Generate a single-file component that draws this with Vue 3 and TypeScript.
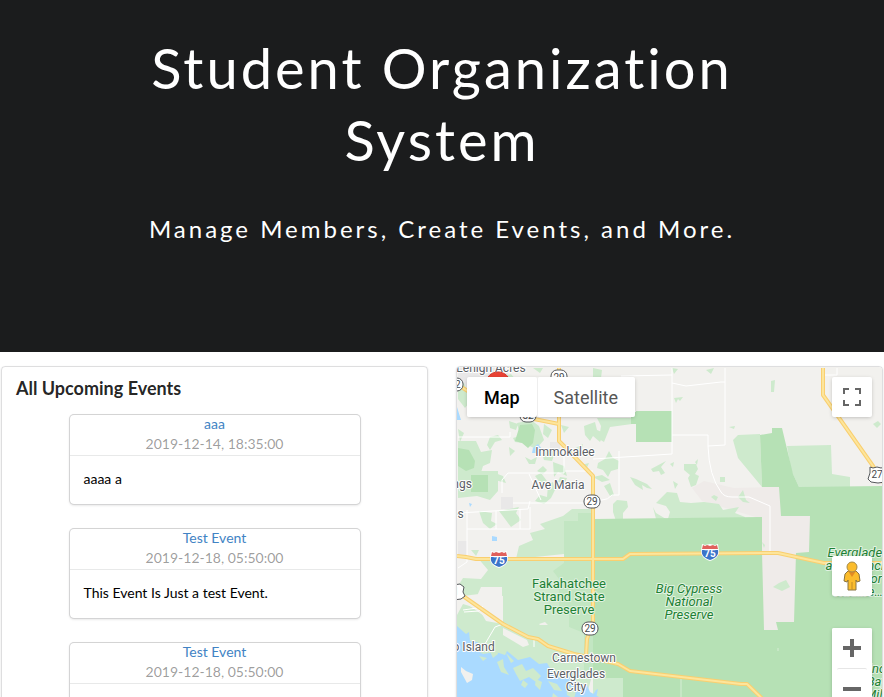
<script setup lang="ts">
import { ref } from 'vue'

interface OrgEvent {
  id: number
  title: string
  when: string
  description: string
}

interface MapLabel {
  x: number
  y: number
  kind: 'town' | 'park' | 'preserve'
  lines: string[]
}

const events: OrgEvent[] = [
  { id: 1, title: 'aaa', when: '2019-12-14, 18:35:00', description: 'aaaa a' },
  { id: 2, title: 'Test Event', when: '2019-12-18, 05:50:00', description: 'This Event Is Just a test Event.' },
  { id: 3, title: 'Test Event', when: '2019-12-18, 05:50:00', description: 'This Event Is Just a test Event.' },
]

const labels: MapLabel[] = [
  { x: 490, y: 371, kind: 'town', lines: ['Lehigh Acres'] },
  { x: 564, y: 455, kind: 'town', lines: ['Immokalee'] },
  { x: 557, y: 488, kind: 'town', lines: ['Ave Maria'] },
  { x: 432, y: 487, kind: 'town', lines: ['Bonita Springs'] },
  { x: 444, y: 517, kind: 'town', lines: ['Naples'] },
  { x: 459, y: 650, kind: 'town', lines: ['Marco Island'] },
  { x: 583, y: 661, kind: 'town', lines: ['Carnestown'] },
  { x: 575, y: 677, kind: 'town', lines: ['Everglades', 'City'] },
  { x: 568, y: 587, kind: 'park', lines: ['Fakahatchee', 'Strand State', 'Preserve'] },
  { x: 688, y: 592, kind: 'preserve', lines: ['Big Cypress', 'National', 'Preserve'] },
  { x: 857, y: 556, kind: 'preserve', lines: ['Everglades', 'and Francis', 'S. Taylor', 'Wildlife…'] },
  { x: 876, y: 672, kind: 'preserve', lines: ['Inc', 'Bay', 'Milli'] },
]

const mapType = ref<'map' | 'satellite'>('map')
</script>

<template>
  <header class="hero">
    <h1>Student Organization System</h1>
    <p>Manage Members, Create Events, and More.</p>
  </header>

  <main class="columns">
    <section class="segment events">
      <h2>All Upcoming Events</h2>
      <div class="cards">
        <article v-for="event in events" :key="event.id" class="card">
          <div class="card-head">
            <a href="#">{{ event.title }}</a>
            <span class="when">{{ event.when }}</span>
          </div>
          <p class="card-body">{{ event.description }}</p>
        </article>
      </div>
    </section>

    <section class="segment map" aria-label="Event map">
      <svg class="tiles" viewBox="456 366 425 400" preserveAspectRatio="xMidYMin slice">
        <rect x="356" y="366" width="700" height="700" fill="#f2f1ee" />

        <!-- built-up land -->
        <g fill="#e9e8e8">
          <path d="M457 367h46l8 12-20 18-34-12zM549 441h10v10h-10zM500 496h12v12h-12zM457 540h9v14h-9z" />
          <path fill="#efebe9" d="M691 487l12-7 30 7 45-1 3 30-20 2-60-18z" />
        </g>

        <!-- light vegetation -->
        <g class="light">
          <path d="M457 381l6 1 4 10 1 10-4 5-7-9zM501 376l9-3 5 6h-12zM592 367l9 2-1 8-8 2zM671 367l6 1-4 5zM705 369l8-2-3 6zM673 397l9-1-3 4-2-2-2 4zM770 380l4-1-1 12h-3zM728 426l6-1-1 3zM872 423l5-3 3 3-4 4z" />
          <path d="M508 420l9 3-2 6-6-2zM516 422l14-3 8 6 5 14-8 9-13-6-8-1-2-4 7-2zM457 428l6 4-4 9zM457 440h18l5 11 11-2-2 13-7 3-4 13-21 2zM583 425l11-4 2 8 7 3-4 9-7-6-3 5-5-6zM596 417h35v6l-22 3-6 15-5-3 2-13zM543 423l8 6-4 8-5-4zM586 430l4-5 2 8z" />
          <path d="M489 436l8-2 4 5-7 2-5 8-3-5zM541 452l8-4 5 4-3 8-8-1zM508 446l6 4-5 5zM560 424l8 2-5 6zM575 407l10-4 2 5-6 4zM524 456l6 3 6-3-2 7h-6zM494 472l8 3 3 7-11-3zM559 476l7 1-2 5-7-1zM536 470l6-5 4 4-4 4zM552 461l11 4 3 10-9-4-4 5zM569 450l13-7-3 12zM580 464l8-2-3 7z" />
          <path d="M597 462l7-4 4-8 4 7 6 3-1 8-7 2-3 6-5-7-6-2zM592 476l9-2 8 5-8 2zM603 485l6-3 4 12-4 1zM629 476l6 2 11 5 5 5-5-1-5-3 1 5-8-5zM650 468l15-8-5 6 4 6-4 2-2-4-6 1zM683 463h12l2 5-3 5 4 2-3 9-5 2-3-9 2-3-6-5zM669 463l4-2-1 5zM694 461l3-3-1 6zM719 476h5v5h-5zM672 480l5 3-3 5zM713 494l4 2-2 4-5-4zM612 503l4-4 10 1 1 6-5 6v8h-7l-3-9zM666 491l10 1 3 9 11 1 13-1 15 2 4 6 16-3-4 6 10 4v3l-78 2 3-10-4-6-10-3zM652 506l3 6 10 6h-10zM737 496l5-7 3 10 4 3-7-1z" />
          <path d="M737 434l22-1 2 53-24-29-5-18zM786 445l44-1 1 29 18 3v10h-51l-8-17zM532 367h10l-3 5z" />
          <path d="M457 470h40v20l-8 9-13-4-19 2zM478 510l13 2-1 8 6 3-7 5-7-6zM498 510l20-4-3 6 5 7-10 7-6-8zM534 475l6-3 6 8-6 3zM534 500l5-6 7 2 1-12 5-3 2 8-4 8-7 6zM515 558l3-13 14-6-3-7 15-4-5-5 23-8 9-7h21v42z" />
          <path d="M470 549h8l-3 6 4 3 8-2 6 3h100v108l-8 30H456V614l6-11 16 5 7 12 17 3 0-28-24-2-16 2-5-10 5-8 18 1 7-9z" />
        </g>
        <g fill="#f2f1ee">
          <path d="M462 600l14-5 4-9h21v23l-8 8-10-2zM502 627l24 12 2 5-6 2-20-12zM538 623l6-2 3 3h-8z" />
        </g>
        <path fill="#c2e6c2" d="M563 520h14v-8h15v162h-9v-42l-15-6v-13h-10v-35l-6-8 11-8z" />

        <!-- dense parkland -->
        <g class="dark">
          <path d="M635 410h36v31h-36zM630 411h5v12h-5zM514 440l5-16 12-1 3 6-2 13-5 5-6-5zM457 447l11 2 6 11-1 7-8 3-8-5zM470 474h17v17h-17z" />
          <path d="M759 434l12-2v-5h10l11 46 6 13 86-1v292H592V518l169-2v-30z" />
        </g>
        <path fill="#efebe9" d="M761 486h17l2 29h29l-1 36-13 1-2 69h-18l2 8h-14l-2-78z" />
        <path class="light" d="M772 586l6-4 7-3 4 7-8 4zM761 541l3 3-1 3z" />
        <path class="light" d="M592 677h30v90h-30z" />
        <path fill="none" stroke="#d6edd5" d="M680 677v90M777 647v3" />

        <!-- water -->
        <g fill="#aadaff">
          <path d="M456 625l9 8 3-2 1 9 8 1-3 7 8 5 13-2 9 3 2-4 11 9 12-3 9 7 8-1 7 12 8 4 10-3 5 8 10 1 3 7 9 5v71H456z" />
          <path d="M456 406l4 13h-4zM532 447l5-4 4 5-3 4h-7zM491 535l5 1v4h-5zM468 502l3 1-2 3zM590 697l5-8 2-1-2 9z" />
        </g>
        <g class="light">
          <path d="M487 646l8-6 2 13-5 4zM505 652l8 8-3 2zM496 661l6-3 1 8 5 8-8-3zM512 667l9-4 4 7 7-3 8 8-5 6-7-5-9 4-4-7zM522 679l5 4-3 4-4-3zM535 678l6 3-2 8-5-5zM547 680l9 3 5 7-8-1zM565 683l10 7-2 8-7-4zM478 655l8 2-4 3zM552 692l6 5h-7z" />
          <path fill="#f2f1ee" d="M460 666l5 4 7 3-1 6-5 3-6-11z" />
        </g>

        <!-- local roads -->
        <g fill="none" stroke="#fff">
          <path d="M457 436h52v-5M620 375l51-1v-7M671 374v79l-79 5M671 382l14 3 35-4h4v-14M724 381v63l-17 1v-11h-36M707 445q1 30 13 46 3 5 11 5h17l21 9v47M618 450v44h-7q-4 5-10 5h-9M501 492v-13l6-7h56v-26M512 502h80M457 512l70-4 2-8M466 509v52l-9 6M466 528h63v-22M495 510v18M519 508v20M528 473l12 26M564 470h28M824 374h12v-7M484 643l10-17 8-3M462 609l14-2M463 611l15-1 4-5M533 637v9" />
        </g>

        <!-- highways -->
        <g class="road-edge">
          <path d="M457 384l13 8 63 26 25 5M558 367v73l6 6 28 29v145l-6 18-1 17M462 595l40 28 25 13 10 2 10 7 26 8 14 3 30 7 12 7 111 13h6l25 24M822 367v27l50 71 12 19" />
          <path d="M456 555l9 1 10 2h118l29 0 7-5 139-1 9 0 46 10 61 0" />
        </g>
        <g class="road-core">
          <path d="M457 384l13 8 63 26 25 5M558 367v73l6 6 28 29v145l-6 18-1 17M462 595l40 28 25 13 10 2 10 7 26 8 14 3 30 7 12 7 111 13h6l25 24M822 367v27l50 71 12 19" />
          <path d="M456 555l9 1 10 2h118l29 0 7-5 139-1 9 0 46 10 61 0" />
        </g>

        <text v-for="label in labels" :key="label.lines[0] + label.x" :class="['label', label.kind]">
          <tspan v-for="(line, i) in label.lines" :key="line" :x="label.x" :y="label.y + i * 13">{{ line }}</tspan>
        </text>

        <!-- road shields -->
        <g class="shield">
          <rect x="550" y="369" width="16" height="13" rx="6" /><text x="558" y="380">29</text>
          <rect x="583" y="494" width="16" height="13" rx="6" /><text x="591" y="504">29</text>
          <rect x="581" y="621" width="16" height="13" rx="6" /><text x="589" y="631">29</text>
          <rect x="519" y="408" width="16" height="13" rx="6" /><text x="527" y="418">82</text>
          <rect x="446" y="377" width="16" height="13" rx="6" /><text x="454" y="387">82</text>
          <path d="M869 466l3 1 4-1 4 1 4-1 3 3-1 5 1 4-3 3-7 1-7-1-3-3 2-6z" /><text x="876" y="477">27</text>
          <path d="M448 583l4 1 7-1 4 3-1 5 2 4-4 3-8 1-6-2z" /><text x="452" y="594">41</text>
        </g>
        <g v-for="p in [{ x: 498, y: 559 }, { x: 709, y: 552 }]" :key="p.x" :transform="`translate(${p.x} ${p.y})`" class="interstate">
          <path fill="#fff" d="M-8-9l3 1 5-1 5 1 3-1 1 7c0 5-3 8-9 10-6-2-9-5-9-10z" />
          <path fill="#e0605c" d="M-7-8l2 1 2-1 3 1 3-1 2 1 2-1 1 4H-8z" />
          <path fill="#3b74c9" d="M-8-3H8c1 5-2 8-8 10-6-2-9-5-8-10z" />
          <text x="0" y="4">75</text>
        </g>

        <path fill="#ea4335" stroke="#d33b2f" d="M497 371c-7 0-12 5-12 12 0 9 9 13 12 25 3-12 12-16 12-25 0-7-5-12-12-12z" />
      </svg>

      <div class="map-type">
        <button type="button" :class="{ active: mapType === 'map' }" @click="mapType = 'map'">Map</button>
        <button type="button" :class="{ active: mapType === 'satellite' }" @click="mapType = 'satellite'">Satellite</button>
      </div>

      <button type="button" class="control fullscreen" aria-label="Toggle fullscreen view">
        <svg width="18" height="18" viewBox="0 0 18 18">
          <path fill="#666" d="M0 0v6h2V2h4V0zM16 0h-4v2h4v4h2V0zM16 16h-4v2h6v-6h-2zM2 12H0v6h6v-2H2z" />
        </svg>
      </button>

      <div class="side-controls">
        <button type="button" class="control" aria-label="Open Street View">
          <svg width="18" height="30" viewBox="0 0 18 30">
            <path fill="#fbbc2b" stroke="#8a7440" d="M5 10h8l3 3 1 7-3 1-1-2v10H5V19l-1 2-3-1 1-7z" />
            <path fill="#e28b22" d="M5 10h8l-4 6z" />
            <path stroke="#c28c25" d="M9 21v8" />
            <circle cx="9" cy="6" r="5" fill="#fbbc2b" stroke="#a58a49" />
          </svg>
        </button>
        <div class="zoom">
          <button type="button" aria-label="Zoom in">
            <svg width="18" height="18" viewBox="0 0 18 18"><path fill="#666" d="M7 0h4v7h7v4h-7v7H7v-7H0V7h7z" /></svg>
          </button>
          <button type="button" aria-label="Zoom out">
            <svg width="18" height="18" viewBox="0 0 18 18"><path fill="#666" d="M0 7h18v4H0z" /></svg>
          </button>
        </div>
      </div>
    </section>
  </main>
</template>

<style>
body {
  margin: 0;
  background: #fff;
}
</style>

<style scoped>
.hero {
  box-sizing: border-box;
  min-height: 352px;
  padding: 32px 140px 0;
  background: #1b1c1d;
  color: #fff;
  font-family: Lato, sans-serif;
  text-align: center;
}

.hero h1 {
  margin: 0;
  font-size: 56px;
  font-weight: 400;
  line-height: 72px;
  letter-spacing: 3px;
}

.hero p {
  margin: 37px 0 0;
  font-size: 24px;
  line-height: 32px;
  letter-spacing: 3px;
}

.columns {
  display: grid;
  grid-template-columns: repeat(2, minmax(0, 1fr));
  gap: 28px;
  padding: 14px 1px;
  font-family: Lato, sans-serif;
  font-size: 14px;
  line-height: 20px;
}

.segment {
  border: 1px solid rgba(34, 36, 38, 0.15);
  border-radius: 4px;
  box-shadow: 0 1px 2px rgba(34, 36, 38, 0.15);
}

.events {
  padding: 9px 14px 14px;
}

.events h2 {
  margin: 0 0 15px;
  color: rgba(0, 0, 0, 0.87);
  font-size: 18px;
  font-weight: 700;
  line-height: 24px;
}

.cards {
  display: flex;
  flex-direction: column;
  align-items: center;
  gap: 25px;
}

.card {
  width: 100%;
  max-width: 290px;
  border-radius: 4px;
  box-shadow: 0 1px 3px 0 #d4d4d5, 0 0 0 1px #d4d4d5;
}

.card-head {
  display: flex;
  flex-direction: column;
  align-items: center;
  border-bottom: 1px solid rgba(34, 36, 38, 0.1);
}

.card-head a {
  color: #4183c4;
  line-height: 18px;
  text-decoration: none;
}

.when {
  color: rgba(0, 0, 0, 0.4);
  line-height: 22px;
}

.card-body {
  margin: 0;
  padding: 13px 14px 15px;
  color: #000;
}

.map {
  position: relative;
  min-height: 400px;
  overflow: hidden;
  font-family: Roboto, sans-serif;
}

.tiles {
  position: absolute;
  inset: 0;
  width: 100%;
  height: 100%;
}

.light {
  fill: #ceeacd;
}

.dark {
  fill: #b6e1b5;
}

.road-edge,
.road-core {
  fill: none;
  stroke: #f9cf70;
  stroke-width: 4;
  stroke-linejoin: round;
}

.road-core {
  stroke: #fde59b;
  stroke-width: 2;
}

.label {
  fill: #5b6065;
  stroke: #fff;
  stroke-width: 2px;
  stroke-linejoin: round;
  paint-order: stroke;
  font-size: 12px;
  text-anchor: middle;
}

.park,
.preserve {
  fill: #1e8135;
  stroke: #e3f3e2;
  font-size: 13px;
}

.preserve {
  font-style: italic;
}

.shield rect,
.shield path {
  fill: #fff;
  stroke: #55585b;
}

.shield text {
  fill: #46494c;
  font-size: 10px;
  text-anchor: middle;
}

.interstate text {
  fill: #fff;
  font-size: 10px;
  font-weight: 700;
  text-anchor: middle;
}

.map button {
  padding: 0;
  border: 0;
  background: #fff;
  cursor: pointer;
}

.map-type {
  position: absolute;
  top: 10px;
  left: 10px;
  display: flex;
  border-radius: 2px;
  box-shadow: 0 1px 4px -1px rgba(0, 0, 0, 0.3);
}

.map .map-type button {
  height: 40px;
  padding: 0 17px;
  border-radius: 2px;
  color: #565656;
  font-family: Roboto, sans-serif;
  font-size: 18px;
}

.map .map-type button + button {
  padding-left: 16px;
  border-left: 1px solid #eee;
}

.map .map-type .active {
  color: #000;
  font-weight: 500;
}

.map .control {
  display: flex;
  align-items: center;
  justify-content: center;
  width: 40px;
  height: 40px;
  border-radius: 2px;
  box-shadow: 0 1px 4px -1px rgba(0, 0, 0, 0.3);
}

.fullscreen {
  position: absolute;
  top: 10px;
  right: 10px;
}

.side-controls {
  position: absolute;
  top: 189px;
  right: 10px;
  display: flex;
  flex-direction: column;
  gap: 32px;
}

.zoom {
  display: flex;
  flex-direction: column;
  border-radius: 2px;
  background: #fff;
  box-shadow: 0 1px 4px -1px rgba(0, 0, 0, 0.3);
}

.map .zoom button {
  display: flex;
  align-items: center;
  justify-content: center;
  height: 40px;
  border-radius: 2px;
}

.map .zoom button + button {
  margin: 0 5px;
  border-top: 1px solid #e6e6e6;
}
</style>
